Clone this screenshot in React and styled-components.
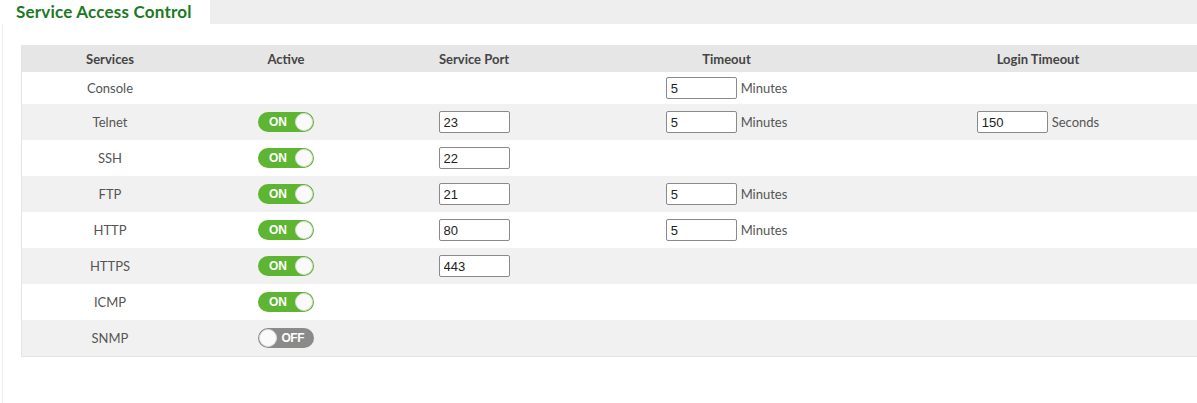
import React from "react";
import styled, { createGlobalStyle } from "styled-components";

const GlobalStyle = createGlobalStyle`
  body {
    margin: 0;
    background: #ffffff;
    font-family: "Lato", "Liberation Sans", sans-serif;
  }
`;

const TabBar = styled.div`
  display: flex;
  height: 24px;
  background: #eeeeee;
`;

const Tab = styled.div`
  width: 194px;
  padding-left: 16px;
  background: #ffffff;
  color: #1b7a1f;
  font-size: 17px;
  font-weight: 700;
  line-height: 24px;
  letter-spacing: 0.2px;
`;

const Panel = styled.div`
  margin-left: 2px;
  border-left: 1px solid #ececec;
  padding: 21px 0 47px 18px;
`;

const Table = styled.table`
  width: 1175px;
  border-collapse: collapse;
  table-layout: fixed;
  border-left: 1px solid #e4e4e4;
  border-bottom: 1px solid #e4e4e4;
`;

const Head = styled.th`
  height: 27px;
  padding: 0;
  background: #e6e6e6;
  color: #444444;
  font-size: 13px;
  font-weight: 700;
  text-align: center;
  width: ${(p) => p.$w}px;
`;

const Row = styled.tr`
  height: ${(p) => (p.$first ? 32 : 36)}px;
  background: ${(p) => (p.$shaded ? "#f1f1f1" : "#ffffff")};
`;

const Cell = styled.td`
  padding: 0;
  text-align: center;
  color: #555555;
  font-size: 13px;
`;

const Field = styled.div`
  display: inline-flex;
  align-items: center;
  gap: 4px;
  vertical-align: middle;
`;

const Input = styled.input`
  box-sizing: border-box;
  width: 71px;
  height: 22px;
  border: 1px solid #8a8a8a;
  border-radius: 2px;
  padding: 0 4px;
  background: #ffffff;
  color: #222222;
  font-family: "Liberation Sans", Arial, sans-serif;
  font-size: 13px;
  outline: none;
`;

const Unit = styled.span`
  color: #555555;
  font-size: 13px;
`;

const Switch = styled.div`
  display: inline-flex;
  align-items: center;
  flex-direction: ${(p) => (p.$on ? "row" : "row-reverse")};
  justify-content: space-between;
  box-sizing: border-box;
  width: 56px;
  height: 20px;
  border-radius: 10px;
  padding: 0 1px 0 ${(p) => (p.$on ? 11 : 1)}px;
  padding-right: ${(p) => (p.$on ? 1 : 10)}px;
  background: ${(p) => (p.$on ? "#5db531" : "#8a8a8a")};
  vertical-align: middle;
`;

const SwitchLabel = styled.span`
  color: #ffffff;
  font-family: "Liberation Sans", Arial, sans-serif;
  font-size: 12px;
  font-weight: 700;
  letter-spacing: ${(p) => (p.$on ? 0 : -0.5)}px;
`;

const Knob = styled.span`
  box-sizing: border-box;
  width: 18px;
  height: 18px;
  border-radius: 50%;
  background: #fafafa;
  border: 1px solid #dcdcdc;
`;

const columns = [
  ["Services", 176],
  ["Active", 176],
  ["Service Port", 200],
  ["Timeout", 305],
  ["Login Timeout", 318],
];

const services = [
  { name: "Console", timeout: "5" },
  { name: "Telnet", active: true, port: "23", timeout: "5", login: "150" },
  { name: "SSH", active: true, port: "22" },
  { name: "FTP", active: true, port: "21", timeout: "5" },
  { name: "HTTP", active: true, port: "80", timeout: "5" },
  { name: "HTTPS", active: true, port: "443" },
  { name: "ICMP", active: true },
  { name: "SNMP", active: false },
];

function Toggle({ on }) {
  return (
    <Switch $on={on}>
      <SwitchLabel $on={on}>{on ? "ON" : "OFF"}</SwitchLabel>
      <Knob />
    </Switch>
  );
}

export default function App() {
  return (
    <>
      <GlobalStyle />
      <TabBar>
        <Tab>Service Access Control</Tab>
      </TabBar>
      <Panel>
        <Table>
          <thead>
            <tr>
              {columns.map(([label, w]) => (
                <Head key={label} $w={w}>
                  {label}
                </Head>
              ))}
            </tr>
          </thead>
          <tbody>
            {services.map((s, i) => (
              <Row key={s.name} $first={i === 0} $shaded={i % 2 === 1}>
                <Cell>{s.name}</Cell>
                <Cell>{s.active !== undefined && <Toggle on={s.active} />}</Cell>
                <Cell>
                  {s.port && <Input defaultValue={s.port} />}
                </Cell>
                <Cell>
                  {s.timeout && (
                    <Field>
                      <Input defaultValue={s.timeout} />
                      <Unit>Minutes</Unit>
                    </Field>
                  )}
                </Cell>
                <Cell>
                  {s.login && (
                    <Field>
                      <Input defaultValue={s.login} />
                      <Unit>Seconds</Unit>
                    </Field>
                  )}
                </Cell>
              </Row>
            ))}
          </tbody>
        </Table>
      </Panel>
    </>
  );
}
